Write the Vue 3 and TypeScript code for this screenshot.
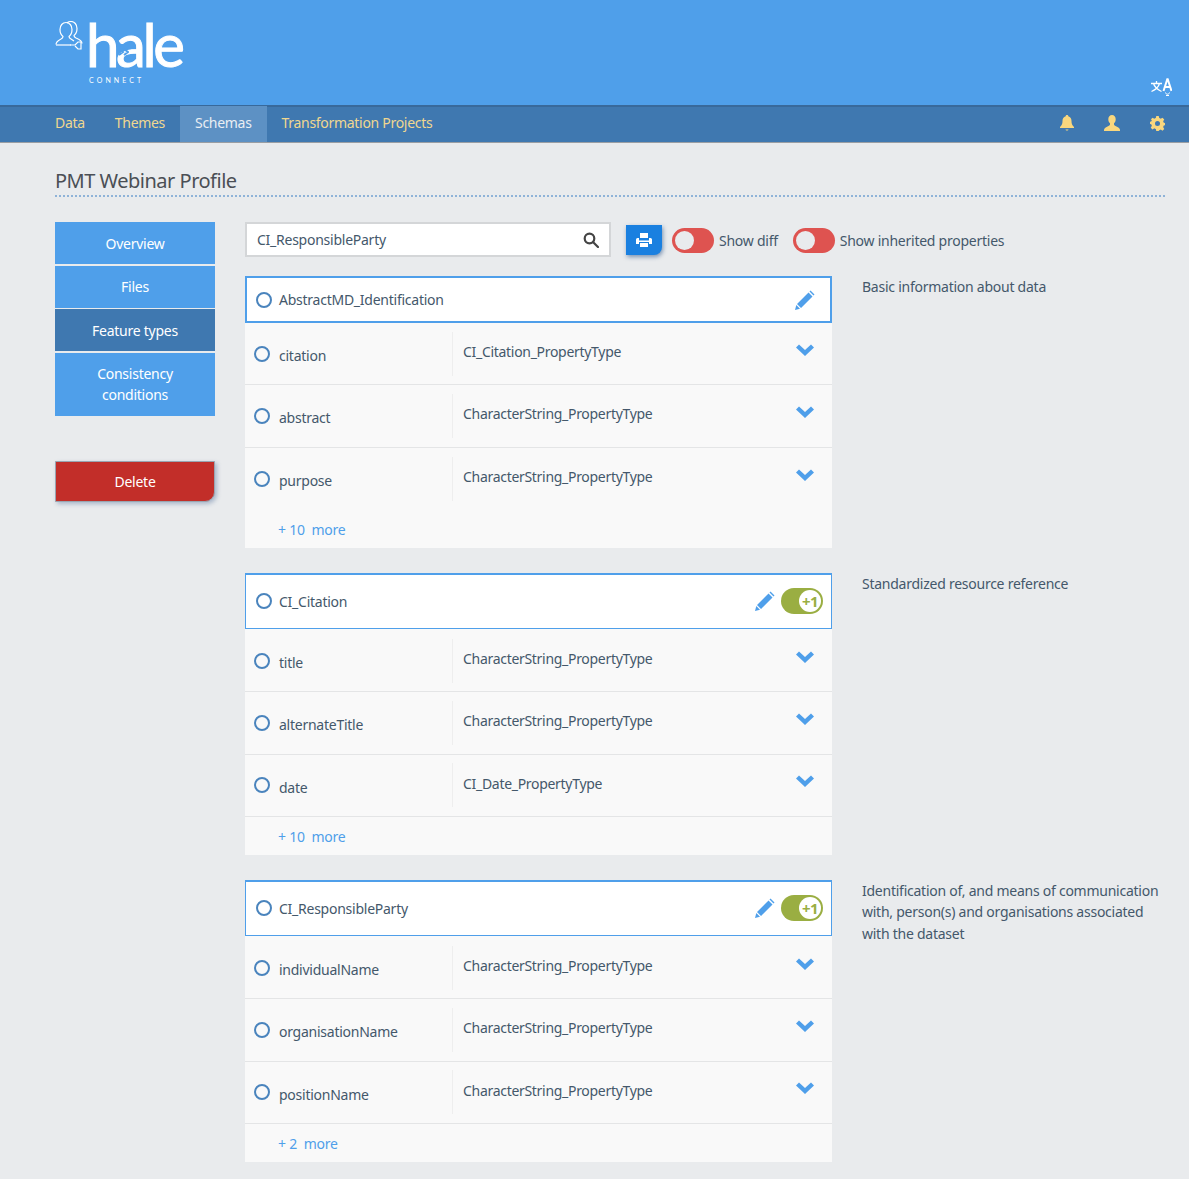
<script setup lang="ts">
interface Property {
  name: string
  type: string
}

interface FeatureType {
  name: string
  description: string
  inherited: boolean
  properties: Property[]
  more: number
}

const navItems = ['Data', 'Themes', 'Schemas', 'Transformation Projects']
const sideItems = ['Overview', 'Files', 'Feature types', 'Consistency conditions']

const charString = 'CharacterString_PropertyType'

const featureTypes: FeatureType[] = [
  {
    name: 'AbstractMD_Identification',
    description: 'Basic information about data',
    inherited: false,
    more: 10,
    properties: [
      { name: 'citation', type: 'CI_Citation_PropertyType' },
      { name: 'abstract', type: charString },
      { name: 'purpose', type: charString },
    ],
  },
  {
    name: 'CI_Citation',
    description: 'Standardized resource reference',
    inherited: true,
    more: 10,
    properties: [
      { name: 'title', type: charString },
      { name: 'alternateTitle', type: charString },
      { name: 'date', type: 'CI_Date_PropertyType' },
    ],
  },
  {
    name: 'CI_ResponsibleParty',
    description: 'Identification of, and means of communication with, person(s) and organisations associated with the dataset',
    inherited: true,
    more: 2,
    properties: [
      { name: 'individualName', type: charString },
      { name: 'organisationName', type: charString },
      { name: 'positionName', type: charString },
    ],
  },
]
</script>

<template>
  <div class="page">
    <header class="banner">
      <div class="logo">
        <svg class="logo__icon" width="30" height="32" viewBox="0 0 30 32" fill="none" stroke="#fff" stroke-width="1.2">
          <path d="M1 23.500c0-3 2-4 5-5.500 1.500-.8 2-1.500 2-2.500-2-1.500-3-4-3-7 0-4 2.500-7 6-7s6 3 6 7c0 3-1 5.500-3 7 0 1 .5 1.700 2 2.500l3 2" />
          <path d="M1 24h15" />
          <path d="M12 2c1-1 2.500-1.500 4-1.500 3.500 0 6 3 6 7 0 3-1 5.500-3 7 0 1 .5 1.700 2 2.500 3 1.500 6 2.500 6 5.500" />
          <path d="M15 24h5l3-3h3v7h-3l-3-3" />
        </svg>
        <div class="logo__text">
          <span class="logo__name">hale</span>
          <svg class="logo__arrow" width="10" height="8" viewBox="0 0 10 8" fill="none" stroke="#4f9fea" stroke-width="2">
            <path d="M0 1l4 3-4 3M5 1l4 3-4 3" />
          </svg>
          <span class="logo__sub">CONNECT</span>
        </div>
      </div>
      <svg class="translate" width="21" height="18" viewBox="0 0 21 18" fill="none" stroke="#fff" stroke-width="1.300">
        <path d="M5.500 3v2.500M0 5.500h11M2.500 5.500c1 3.500 4 6 8 8M8.500 5.500c-1 3.500-3.500 6-8 8" />
        <path d="M16.500 .5l-4 12.500M16.500 .5l4 12.500M13.800 9h5.500" stroke-width="2" />
        <path d="M14.500 14.500c.3 2.300 3.700 2.300 4 0M15 17.500h3" stroke-width="1" />
      </svg>
    </header>

    <nav class="nav">
      <a
        v-for="item in navItems"
        :key="item"
        class="nav__item"
        :class="{ 'nav__item--active': item === 'Schemas' }"
      >{{ item }}</a>
      <div class="nav__icons">
        <svg width="14" height="16" viewBox="0 0 14 16" fill="#f9d77e">
          <path d="M7 0c.8 0 1.300.5 1.300 1.200C10.500 1.800 11.500 3.500 11.500 6c0 3 .8 4.500 2.500 6v1H0v-1c1.700-1.500 2.500-3 2.500-6 0-2.500 1-4.200 3.200-4.800C5.700.5 6.200 0 7 0zM5.500 14.500h3c0 .5-.6 1-1.500 1s-1.500-.5-1.500-1z" />
        </svg>
        <svg width="16" height="16" viewBox="0 0 16 16" fill="#f9d77e">
          <path d="M8 0c2.200 0 3.700 1.700 3.700 4.200 0 1.800-.7 3.200-1.700 4.100v1.200c0 .7 1 1.200 2.500 1.900 2 .9 3.500 1.800 3.500 3.600v1H0v-1c0-1.800 1.500-2.700 3.500-3.600C5 10.700 6 10.200 6 9.500V8.300C5 7.400 4.300 6 4.300 4.200 4.300 1.700 5.800 0 8 0z" />
        </svg>
        <svg width="15" height="15" viewBox="0 0 24 24" fill="#f9d77e">
          <path fill-rule="evenodd" d="M10 0h4l.7 3.300c.9.300 1.700.6 2.400 1.100L20 2.600 22.800 5.400 21 8.300c.4.700.8 1.500 1 2.400l3 .7v3.200l-3 .7c-.2.900-.6 1.700-1 2.400l1.800 2.900-2.800 2.800-2.900-1.800c-.7.500-1.500.8-2.400 1.100L14 24h-4l-.7-3.300c-.9-.3-1.700-.6-2.400-1.100L4 21.400 1.200 18.600 3 15.700c-.4-.7-.8-1.500-1-2.400l-3-.7V9.400l3-.7c.2-.9.6-1.700 1-2.400L1.200 5.400 4 2.600l2.900 1.800c.7-.5 1.500-.8 2.400-1.100zM12 8a4 4 0 1 0 0 8 4 4 0 0 0 0-8z" />
        </svg>
      </div>
    </nav>

    <main class="main">
      <h1 class="title">PMT Webinar Profile</h1>

      <div class="columns">
        <aside class="side">
          <a
            v-for="item in sideItems"
            :key="item"
            class="side__item"
            :class="{ 'side__item--active': item === 'Feature types' }"
          >{{ item }}</a>
          <button class="delete">Delete</button>
        </aside>

        <section class="content">
          <div class="toolbar">
            <div class="search">
              <span>CI_ResponsibleParty</span>
              <svg width="16" height="16" viewBox="0 0 16 16" fill="none" stroke="#444" stroke-width="2.200">
                <circle cx="6.500" cy="6.500" r="4.800" />
                <path d="M10 10l5 5" stroke-linecap="round" />
              </svg>
            </div>
            <button class="print">
              <svg width="16" height="14" viewBox="0 0 16 14" fill="#fff">
                <path fill-rule="evenodd" d="M4 0h8v5H4zM1.500 5H3v2.500h10V5h1.500A1.500 1.500 0 0 1 16 6.500V11h-3V9H3v2H0V6.500A1.500 1.500 0 0 1 1.500 5zM4 10h8v4H4z" />
              </svg>
            </button>
            <label class="switch">
              <span class="switch__track"><span class="switch__knob" /></span>
              Show diff
            </label>
            <label class="switch">
              <span class="switch__track"><span class="switch__knob" /></span>
              Show inherited properties
            </label>
          </div>

          <div v-for="ft in featureTypes" :key="ft.name" class="group">
            <div class="card">
              <div class="card__head" :class="{ 'card__head--tall': ft.inherited }">
                <span class="radio" />
                <span class="card__name">{{ ft.name }}</span>
                <svg class="pencil" width="20" height="20" viewBox="0 0 20 20" fill="#4f9fea">
                  <path d="M14.500 1.500l1-1 4 4-1 1zM13.500 2.500l4 4L6 18l-4-4zM1.300 15l3.700 3.700L0 20z" />
                </svg>
                <span v-if="ft.inherited" class="badge"><span class="badge__knob">+1</span></span>
              </div>
              <div
                v-for="(prop, idx) in ft.properties"
                :key="prop.name"
                class="row"
                :class="{ 'row--plain': !ft.inherited && idx === ft.properties.length - 1 }"
              >
                <div class="row__name">
                  <span class="radio radio--row" />
                  <span class="row__label">{{ prop.name }}</span>
                </div>
                <div class="row__type">{{ prop.type }}</div>
                <svg class="chevron" width="18" height="12" viewBox="0 0 18 12" fill="#4f9fea">
                  <path d="M0 3.500 3 .5l6 5.500 6-5.500 3 3-9 8.500z" />
                </svg>
              </div>
              <div class="more"><a>+ {{ ft.more }}&nbsp; more</a></div>
            </div>
            <p class="desc">{{ ft.description }}</p>
          </div>
        </section>
      </div>
    </main>
  </div>
</template>

<style>
html,
body {
  margin: 0;
  background: #e9ebed;
}
</style>

<style scoped>
.page {
  font-family: 'Noto Sans', 'Open Sans', sans-serif;
  font-size: 14px;
  letter-spacing: -0.25px;
  color: #44586b;
  background: #e9ebed;
  padding-bottom: 17px;
}

.banner {
  height: 105px;
  background: #4f9fea;
  padding: 0 17px 0 55px;
  box-sizing: border-box;
  display: flex;
  justify-content: space-between;
  align-items: flex-end;
}

.logo {
  align-self: flex-start;
  display: flex;
  padding-top: 21px;
}

.logo__icon {
  margin-right: 3px;
}

.logo__text {
  display: flex;
  flex-direction: column;
  position: relative;
}

.logo__name {
  font-family: Lato, sans-serif;
  font-size: 60px;
  line-height: 46px;
  letter-spacing: -3.4px;
  margin-left: -2px;
  color: #fff;
  -webkit-text-stroke: 1px #fff;
}

.logo__arrow {
  position: absolute;
  left: 31px;
  top: 27px;
}

.logo__sub {
  font-family: Lato, sans-serif;
  font-size: 7px;
  line-height: 9px;
  margin: 9px 0 0 1px;
  letter-spacing: 3.1px;
  color: #fff;
}

.translate {
  margin-bottom: 9px;
}

.nav {
  height: 38px;
  box-sizing: border-box;
  background: #3f78b0;
  border-top: 2px solid #38699b;
  border-bottom: 1px solid #9a9ea3;
  padding-left: 40px;
  display: flex;
}

.nav__item {
  height: 36px;
  margin-top: -1px;
  padding: 0 15px;
  line-height: 34px;
  letter-spacing: -0.3px;
  color: #f0d78f;
}

.nav__item--active {
  background: #5d91c4;
  color: #e9eef3;
}

.nav__icons {
  margin-left: auto;
  padding: 0 24px 3px 0;
  display: flex;
  gap: 30px;
  align-items: center;
}

.main {
  padding: 0 24px 0 55px;
}

.title {
  margin: 0;
  padding-top: 25px;
  height: 54px;
  box-sizing: border-box;
  font-size: 20px;
  line-height: 26px;
  font-weight: 400;
  letter-spacing: -0.5px;
  color: #4b4f55;
  border-bottom: 2px dotted #8fb3d8;
}

.columns {
  display: flex;
  margin-top: 25px;
}

.side {
  width: 160px;
  flex: none;
  display: flex;
  flex-direction: column;
  gap: 1.67px;
  margin-right: 30px;
}

.side__item {
  background: #4f9fea;
  color: #fff;
  text-align: center;
  padding: 10.5px 20px;
  line-height: 21px;
}

.side__item--active {
  background: #3f78b0;
}

.delete {
  margin-top: 43.3px;
  height: 41px;
  border: 1px solid #9aa5b1;
  border-bottom-right-radius: 10px;
  background: #c22e29;
  color: #fff;
  font: inherit;
  letter-spacing: inherit;
  box-shadow: 2px 2px 4px rgba(90, 120, 160, 0.45);
}

.content {
  flex: 1;
}

.toolbar {
  display: flex;
  align-items: center;
  height: 35px;
  margin-bottom: 19px;
}

.search {
  width: 366px;
  height: 35px;
  box-sizing: border-box;
  background: #fff;
  border: 2px solid #d4d6d8;
  padding: 0 10px;
  display: flex;
  align-items: center;
  justify-content: space-between;
}

.print {
  width: 36px;
  height: 30px;
  margin: 0 10px 0 15px;
  border: none;
  border-bottom-right-radius: 8px;
  background: #1a80e0;
  box-shadow: 1px 2px 4px rgba(50, 90, 140, 0.6);
  display: flex;
  align-items: center;
  justify-content: center;
}

.switch {
  display: flex;
  align-items: center;
  gap: 5px;
  margin: 2px 15px 0 0;
}

.switch__track {
  width: 42px;
  height: 25px;
  box-sizing: border-box;
  border-radius: 13px;
  background: #de5350;
  padding: 3px;
  display: block;
}

.switch__knob {
  display: block;
  width: 19px;
  height: 19px;
  border-radius: 50%;
  background: #e9ebed;
}

.group {
  display: flex;
  margin-bottom: 25px;
}

.group:last-child {
  margin-bottom: 0;
}

.card {
  width: 587px;
  flex: none;
  background: #f9f9f9;
}

.card__head {
  height: 47px;
  box-sizing: border-box;
  background: #fff;
  border: 2px solid #4f9fea;
  display: flex;
  align-items: center;
  padding: 0 15px 0 9px;
}

.card__head--tall {
  height: 56px;
  margin-bottom: 1px;
  border-width: 2px 1px 1px;
  padding: 0 8px 0 10px;
}

.card__name {
  flex: 1;
  margin-left: 7px;
}

.radio {
  width: 16px;
  height: 16px;
  box-sizing: border-box;
  border: 2px solid #4a84bd;
  border-radius: 50%;
  flex: none;
}

.radio--row {
  margin-left: 9px;
}

.badge {
  width: 42px;
  height: 26px;
  border-radius: 13px;
  background: #9aae42;
  margin-left: 6px;
  position: relative;
}

.badge__knob {
  position: absolute;
  right: 2px;
  top: 2px;
  width: 22px;
  height: 22px;
  border-radius: 50%;
  background: #fff;
  color: #9aae42;
  font-weight: 700;
  font-size: 15px;
  letter-spacing: -0.5px;
  line-height: 22px;
  text-align: center;
}

.row {
  height: 62.33px;
  box-sizing: border-box;
  display: flex;
  align-items: center;
  border-bottom: 1px solid #e4e5e6;
}

.row--plain {
  border-bottom: none;
}

.row__name {
  width: 208px;
  height: 44px;
  flex: none;
  display: flex;
  align-items: center;
  border-right: 1px solid #eee;
  box-sizing: border-box;
}

.row__label {
  margin-left: 9px;
  padding-top: 4px;
}

.row__type {
  flex: 1;
  margin-left: 10px;
  margin-top: -4px;
  letter-spacing: -0.3px;
}

.chevron {
  margin: -8px 18px 0 0;
}

.more {
  height: 38px;
  box-sizing: border-box;
  padding: 2px 0 0 33px;
  line-height: 36px;
  color: #4f9fea;
}

.desc {
  margin: 0 0 0 30px;
  line-height: 21.5px;
}
</style>
